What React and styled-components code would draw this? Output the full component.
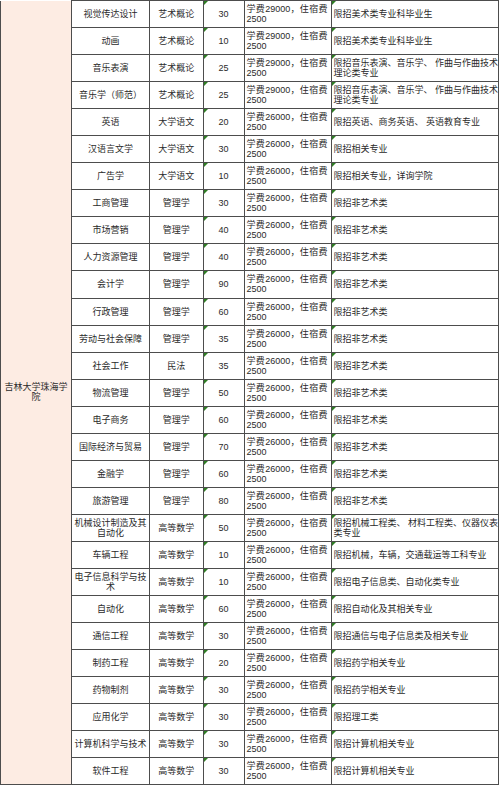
import React from "react";
import styled, { createGlobalStyle } from "styled-components";

const GlobalStyle = createGlobalStyle`
  body {
    margin: 0;
    background: #ffffff;
  }
`;

const widths = [71, 78, 53.5, 41, 87, "auto"];

const rows = [
  ["视觉传达设计", "艺术概论", "30", "29000", "限招美术类专业科毕业生"],
  ["动画", "艺术概论", "10", "29000", "限招美术类专业科毕业生"],
  ["音乐表演", "艺术概论", "25", "29000", "限招音乐表演、音乐学、 作曲与作曲技术\n理论类专业"],
  ["音乐学（师范）", "艺术概论", "25", "29000", "限招音乐表演、音乐学、 作曲与作曲技术\n理论类专业"],
  ["英语", "大学语文", "20", "26000", "限招英语、商务英语、 英语教育专业"],
  ["汉语言文学", "大学语文", "30", "26000", "限招相关专业"],
  ["广告学", "大学语文", "10", "26000", "限招相关专业，详询学院"],
  ["工商管理", "管理学", "30", "26000", "限招非艺术类"],
  ["市场营销", "管理学", "40", "26000", "限招非艺术类"],
  ["人力资源管理", "管理学", "40", "26000", "限招非艺术类"],
  ["会计学", "管理学", "90", "26000", "限招非艺术类"],
  ["行政管理", "管理学", "60", "26000", "限招非艺术类"],
  ["劳动与社会保障", "管理学", "35", "26000", "限招非艺术类"],
  ["社会工作", "民法", "35", "26000", "限招非艺术类"],
  ["物流管理", "管理学", "50", "26000", "限招非艺术类"],
  ["电子商务", "管理学", "60", "26000", "限招非艺术类"],
  ["国际经济与贸易", "管理学", "70", "26000", "限招非艺术类"],
  ["金融学", "管理学", "60", "26000", "限招非艺术类"],
  ["旅游管理", "管理学", "80", "26000", "限招非艺术类"],
  ["机械设计制造及其\n自动化", "高等数学", "50", "26000", "限招机械工程类、 材料工程类、仪器仪表\n类专业"],
  ["车辆工程", "高等数学", "10", "26000", "限招机械，车辆，交通载运等工科专业"],
  ["电子信息科学与技\n术", "高等数学", "10", "26000", "限招电子信息类、自动化类专业"],
  ["自动化", "高等数学", "60", "26000", "限招自动化及其相关专业"],
  ["通信工程", "高等数学", "30", "26000", "限招通信与电子信息类及相关专业"],
  ["制药工程", "高等数学", "20", "26000", "限招药学相关专业"],
  ["药物制剂", "高等数学", "30", "26000", "限招药学相关专业"],
  ["应用化学", "高等数学", "30", "26000", "限招理工类"],
  ["计算机科学与技术", "高等数学", "30", "26000", "限招计算机相关专业"],
  ["软件工程", "高等数学", "30", "26000", "限招计算机相关专业"],
];

export default function App() {
  return (
    <>
      <GlobalStyle />
      <Table>
        <colgroup>
          {widths.map((w, i) => (
            <Col key={i} $w={w} />
          ))}
        </colgroup>
        <tbody>
          {rows.map(([major, subject, count, fee, note], i) => (
            <Row key={i}>
              {i === 0 && <School rowSpan={rows.length}>{"吉林大学珠海学\n院"}</School>}
              <Cell $align="center">{major}</Cell>
              <Cell $align="center">{subject}</Cell>
              <Cell $align="center" $flag>
                {count}
              </Cell>
              <Cell $align="left">
                <FeeLine>{`学费${fee}，住宿费`}</FeeLine>
                <FeeTail>2500</FeeTail>
              </Cell>
              <Cell $align="left" $flag>
                {note}
              </Cell>
            </Row>
          ))}
        </tbody>
      </Table>
    </>
  );
}

const Table = styled.table`
  width: 499px;
  table-layout: fixed;
  border-collapse: collapse;
  font-family: "Liberation Sans", "Noto Sans CJK SC", sans-serif;
  font-size: 9px;
  line-height: 10px;
  color: #2a2a2a;
`;

const Col = styled.col`
  width: ${(p) => (typeof p.$w === "number" ? `${p.$w}px` : p.$w)};
`;

const Row = styled.tr`
  height: 27.06px;
`;

const Cell = styled.td`
  position: relative;
  border: 1px solid #4d4d4d;
  padding: 0 2px;
  text-align: ${(p) => p.$align};
  vertical-align: middle;
  white-space: pre;
  overflow: hidden;

  &::before {
    content: "";
    display: ${(p) => (p.$flag ? "block" : "none")};
    position: absolute;
    top: 0;
    left: 0;
    border-top: 4px solid #2f7d24;
    border-right: 4px solid transparent;
  }
`;

const FeeLine = styled.span`
  display: block;
  padding-right: 1px;
  text-align: justify;
  text-align-last: justify;
  white-space: normal;
  word-break: break-all;
`;

const FeeTail = styled.span`
  display: block;
`;

const School = styled.td`
  border: 1px solid #4d4d4d;
  border-top: none;
  background: #fdece3;
  padding: 0;
  text-align: center;
  vertical-align: middle;
  white-space: pre;
`;
